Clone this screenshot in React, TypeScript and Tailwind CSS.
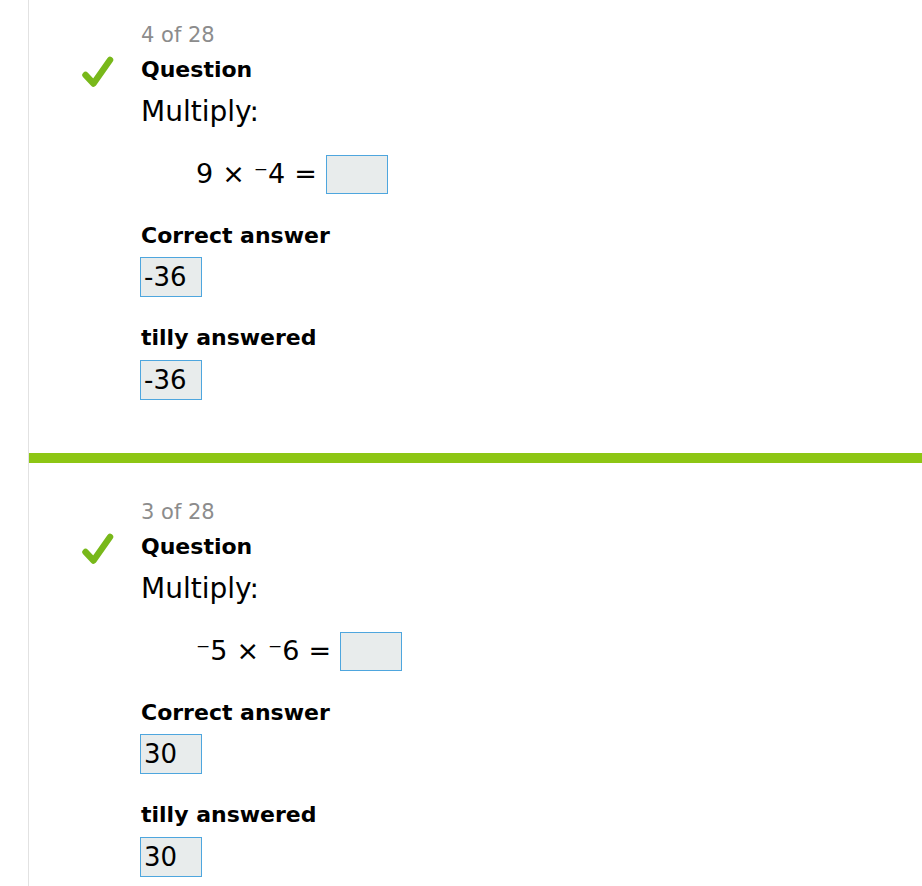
import type { ReactNode } from 'react';

type Result = {
  position: string;
  expression: ReactNode;
  correct: string;
  answered: string;
};

const font = { fontFamily: '"DejaVu Sans", Verdana, sans-serif' };

const results: Result[] = [
  {
    position: '4 of 28',
    expression: (
      <>
        <span>9</span>
        <span>×</span>
        <span>⁻4</span>
        <span>=</span>
      </>
    ),
    correct: '-36',
    answered: '-36',
  },
  {
    position: '3 of 28',
    expression: (
      <>
        <span>⁻5</span>
        <span>×</span>
        <span>⁻6</span>
        <span>=</span>
      </>
    ),
    correct: '30',
    answered: '30',
  },
];

function CheckMark() {
  return (
    <svg width="34" height="34" viewBox="0 0 34 34" aria-hidden="true">
      <path
        d="M4.5 20 L12.5 28.5 L29 5"
        fill="none"
        stroke="#78b81a"
        strokeWidth="6.5"
        strokeLinecap="round"
        strokeLinejoin="round"
      />
    </svg>
  );
}

function AnswerBox({ value }: { value: string }) {
  return (
    <div className="-ml-px flex h-[40px] w-[62px] items-center border border-[#4ea6de] bg-[#e8ecec] pl-[3px] text-[26px] leading-none text-black">
      {value}
    </div>
  );
}

function QuestionResult({ result, first }: { result: Result; first: boolean }) {
  return (
    <section className={first ? 'pt-[23px] pb-[53px]' : 'pt-[37px] pb-[11px]'}>
      <div className="grid grid-cols-[112px_1fr]">
        <div />
        <p className="text-[21px] leading-[24px] text-[#8c8c8c]">{result.position}</p>

        <div className="flex justify-end pr-[26px] pt-[8px]">
          <CheckMark />
        </div>
        <div className="pt-[10px]">
          <h3 className="text-[22px] font-bold leading-[26px] text-black">Question</h3>
          <p className="mt-[13px] text-[28px] leading-[32px] text-black">Multiply:</p>

          <div className="mt-[27px] flex h-[39px] items-center pl-[55px] text-[27px] text-black">
            <div className="flex items-center gap-[9px]">{result.expression}</div>
            <div className="ml-[9px] h-[39px] w-[62px] border border-[#4ea6de] bg-[#e8ecec]" />
          </div>

          <h4 className="mt-[29px] text-[22px] font-bold leading-[26px] text-black">Correct answer</h4>
          <div className="mt-[8px]">
            <AnswerBox value={result.correct} />
          </div>

          <h4 className="mt-[28px] text-[22px] font-bold leading-[26px] text-black">tilly answered</h4>
          <div className="mt-[9px]">
            <AnswerBox value={result.answered} />
          </div>
        </div>
      </div>
    </section>
  );
}

export default function App() {
  return (
    <div className="min-h-[886px] bg-white pl-[28px]" style={font}>
      <div className="min-h-[886px] border-l border-[#e2e2e2]">
        {results.map((result, i) => (
          <div key={result.position}>
            {i > 0 && <div className="h-[10px] bg-[#8dc614]" />}
            <QuestionResult result={result} first={i === 0} />
          </div>
        ))}
      </div>
    </div>
  );
}
